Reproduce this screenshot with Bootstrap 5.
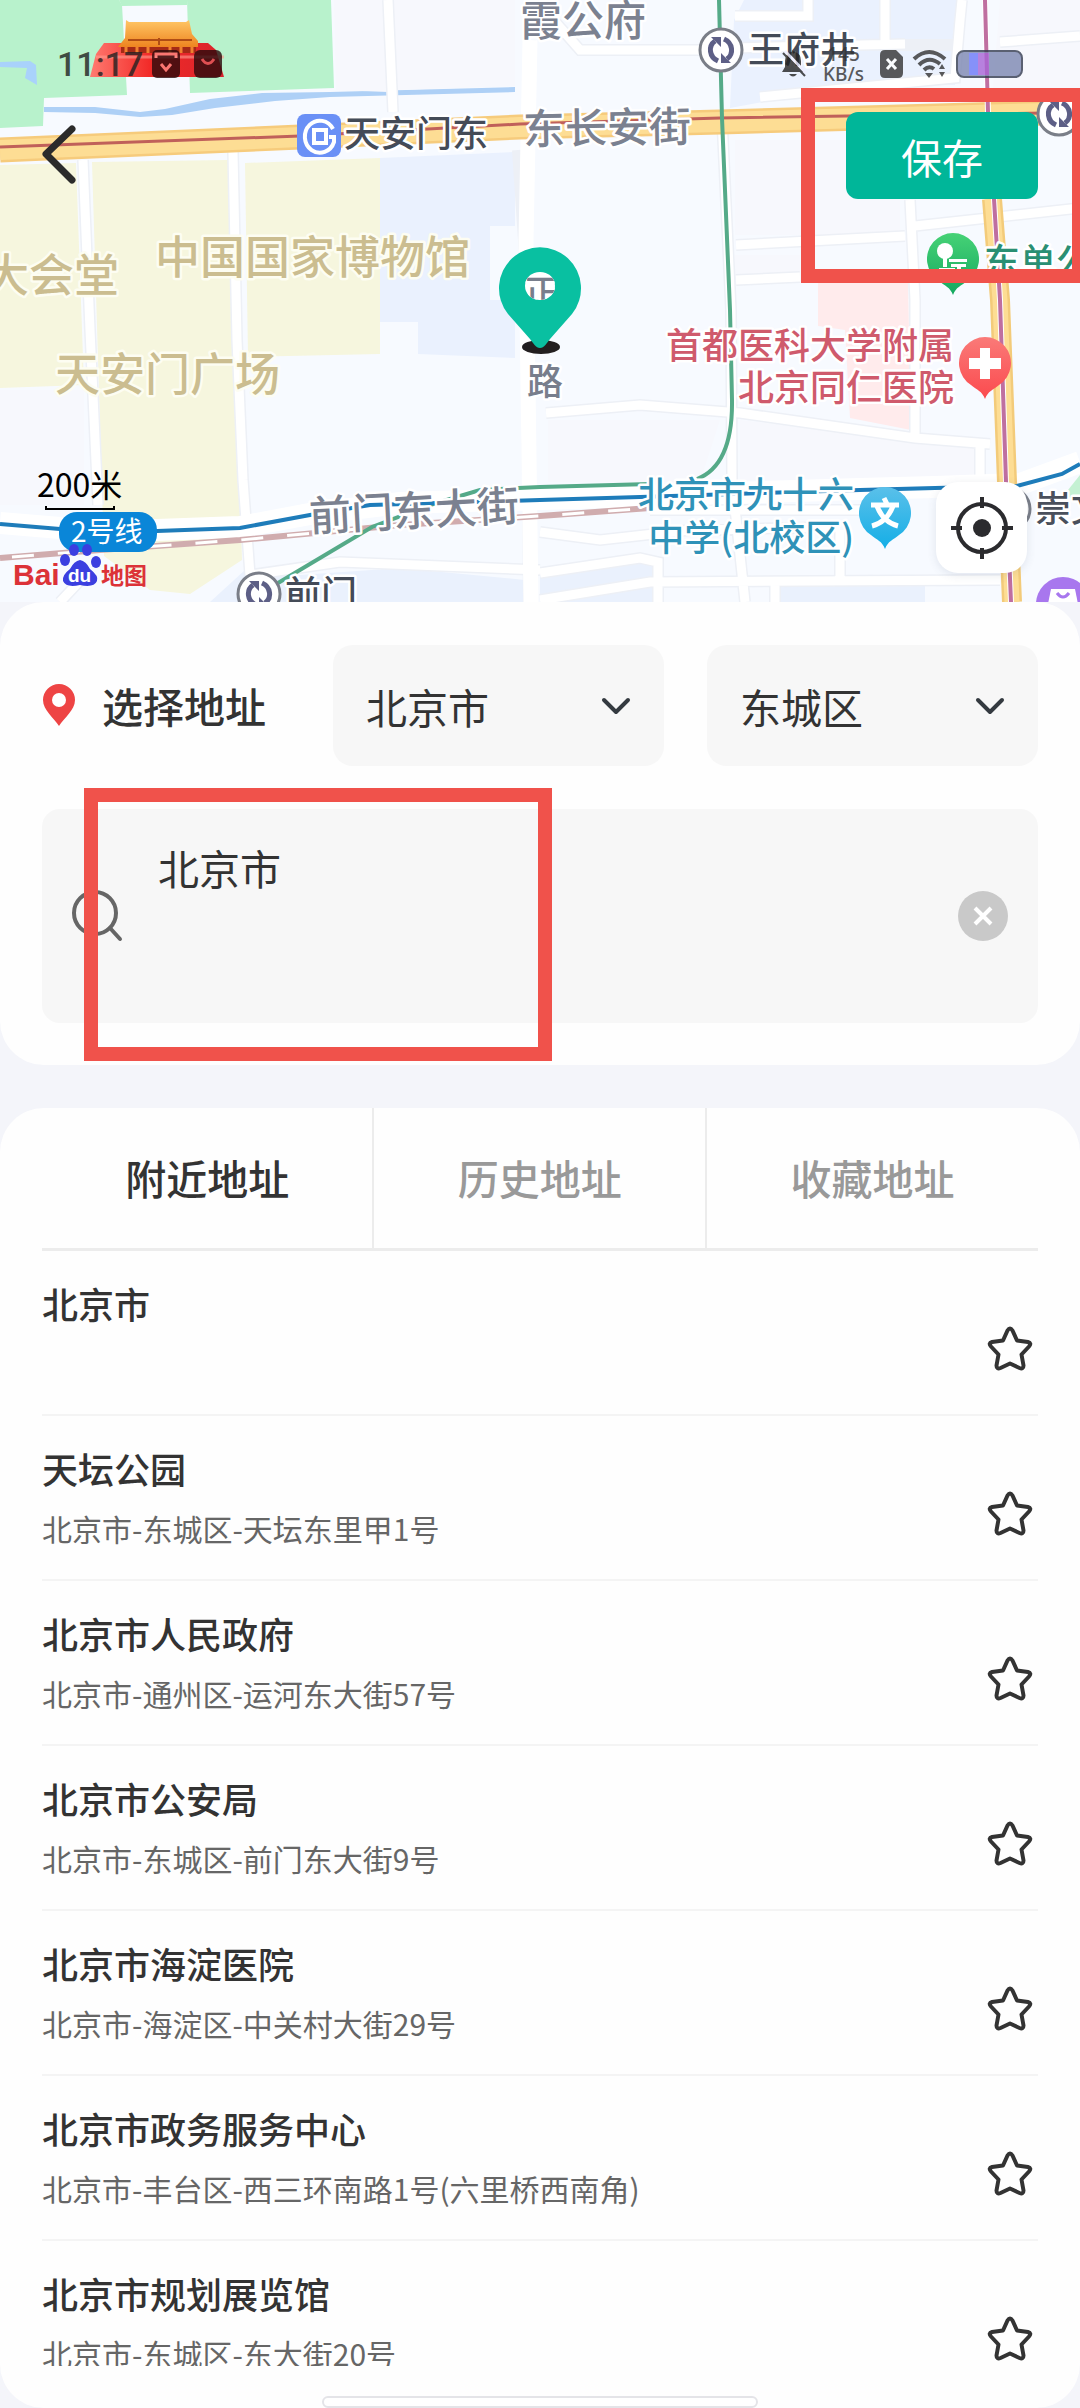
<!DOCTYPE html>
<html lang="zh-CN">
<head>
<meta charset="utf-8">
<meta name="viewport" content="width=device-width, initial-scale=1">
<title>选择地址</title>
<link href="https://cdn.jsdelivr.net/npm/bootstrap@5.3.0/dist/css/bootstrap.min.css" rel="stylesheet">
<style>
  :root { --ink: #333; --muted: #999; --edge: 42px; --frame: #f0524b; }
  body { background: #f4f5fa; color: var(--ink); font-family: "Noto Sans CJK SC", "Noto Sans", sans-serif; }
  .map-area { height: 602px; }
  .map-canvas { display: block; width: 100%; height: 100%; }
  .map-canvas text { paint-order: stroke; stroke: #fff; stroke-width: 5px; stroke-linejoin: round; font-weight: 500; }
  .map-canvas .flat { stroke: none; font-weight: 400; }
  .map-canvas .place { font-size: 45px; fill: #cbbd90; stroke: #fdfdf2; }
  .road-name { font-size: 42px; fill: #7b8190; }
  .poi { font-size: 36px; }
  .status-bar { top: 44px; left: 57px; right: 57px; height: 40px; opacity: .8; }
  .clock { font: 500 34px/40px Roboto, sans-serif; color: #222; }
  .net-speed { font: 500 19px/20px "Noto Sans", sans-serif; color: #333; }
  .back-btn { top: 122px; left: 36px; line-height: 0; }
  .save-btn { top: 112px; right: 42px; width: 192px; height: 87px; border-radius: 12px; background: #00b699; color: #fff; font-size: 41px; line-height: 60px; }
  .locate-btn { right: 53px; bottom: 29px; width: 91px; height: 91px; border-radius: 22px; background: #fff; box-shadow: 0 2px 10px rgba(60,70,110,.12); }
  .hint-frame { border: 14px solid var(--frame); pointer-events: none; }
  .hint-save { top: 88px; right: 0; width: 279px; height: 195px; border-right-width: 8px; }
  .hint-search { top: -21px; left: 42px; width: 468px; height: 273px; }
  .sheet { background: #fefefe; border-radius: 44px; padding: 0 var(--edge); }
  .sheet-filter { padding-top: 43px; padding-bottom: 42px; }
  .sheet-label { width: 248px; font-size: 41px; font-weight: 500; gap: 26px; }
  .filter-row { gap: 43px; margin-bottom: 43px; }
  .area-select { height: 121px; border: 0; border-radius: 20px; background-color: #f7f7f7; color: var(--ink); font-size: 41px; line-height: 60px; padding: 0 80px 0 33px; background-position: right 32px center; background-size: 32px; }
  .search-box { height: 214px; border-radius: 18px; background: #f7f7f7; padding: 0 30px 0 28px; }
  .search-text { height: 214px; resize: none; border: 0; background: transparent; color: var(--ink); font-size: 41px; line-height: 60px; padding: 28px 0 0 34px; overflow: hidden; }
  .search-text:focus { background: transparent; box-shadow: none; }
  .sheet-list { margin-top: 43px; }
  .tab-row { border-bottom: 3px solid #ececec; }
  .tab-btn { height: 140px; border: 0; border-right: 2px solid #ececec; background: none; color: var(--muted); font-size: 41px; font-weight: 500; }
  .tab-btn:last-child { border-right: 0; }
  .tab-btn.active { color: var(--ink); }
  .address-list { min-height: 0; }
  .address-item { height: 165px; border-bottom: 2px solid #f4f4f4; padding-top: 26px; }
  .address-name { font-size: 36px; font-weight: 500; line-height: 52px; margin-bottom: 14px; }
  .address-detail { font-size: 30px; line-height: 40px; color: #666; }
  .star-btn { margin: 48px 4px 0 0; line-height: 0; }
  .home-zone { height: 42px; }
  .home-bar { width: 436px; height: 12px; border: 2px solid #e4e4e8; border-radius: 8px; background: #fff; }
</style>
<script src="https://cdn.jsdelivr.net/npm/bootstrap@5.3.0/dist/js/bootstrap.bundle.min.js"></script>
</head>
<body class="vh-100 overflow-hidden d-flex flex-column">

<header class="map-area position-relative overflow-hidden flex-shrink-0">
  <svg class="map-canvas" viewBox="0 0 1080 602" preserveAspectRatio="xMidYMid slice" role="img" aria-label="地图">
    <defs>
      <linearGradient id="roof" x1="0" y1="0" x2="0" y2="1"><stop offset="0" stop-color="#ffc766"/><stop offset="1" stop-color="#ee8420"/></linearGradient>
      <linearGradient id="wall" x1="0" y1="0" x2="1" y2="0"><stop offset="0" stop-color="#ff7a70"/><stop offset=".45" stop-color="#f22a28"/><stop offset="1" stop-color="#d8242c"/></linearGradient>
      <linearGradient id="redPin" x1="0" y1="0" x2="0" y2="1"><stop offset="0" stop-color="#fa7a78"/><stop offset="1" stop-color="#fb4a4e"/></linearGradient>
      <linearGradient id="bluePin" x1="0" y1="0" x2="0" y2="1"><stop offset="0" stop-color="#5ac0ea"/><stop offset="1" stop-color="#14aee6"/></linearGradient>
      <linearGradient id="greenPin" x1="0" y1="0" x2="0" y2="1"><stop offset="0" stop-color="#46d276"/><stop offset="1" stop-color="#14a860"/></linearGradient>
      <clipPath id="hole"><ellipse cx="540" cy="286" rx="15" ry="14"/></clipPath>
      <g id="metro">
        <circle r="21" fill="#fff" stroke="#7a7e88" stroke-width="3"/>
        <path d="M-3 11C-12 7-13-4-6-9M3-11C12-7 13 4 6 9" fill="none" stroke="#5d5f86" stroke-width="5"/>
        <path d="M-10-13L0-13L0-3ZM10 13L0 13L0 3Z" fill="#5d5f86"/>
      </g>
      <path id="poiPin" d="M0 36C-3 28-8 27-14 22A26 26 0 1 1 14 22C8 27 3 28 0 36Z"/>
    </defs>
    <rect width="1080" height="602" fill="#f7faff"/>
    <!-- land use -->
    <path d="M0 0H119L122 5 127 95 44 98 43 126 0 128ZM187 0H331L334 88 190 93Z" fill="#b8f2cc"/>
    <path d="M119 0H187V5L122 6Z" fill="#b8f2cc"/>
    <path d="M0 62L30 61 36 65 37 85 25 78 27 68 0 67Z" fill="#a9d2fb"/>
    <path d="M44 107H95L140 112 165 109 210 99 262 93 330 92 515 87V92L330 97 275 101 215 108 172 115 140 117 95 113 44 112Z" fill="#aed0f6"/>
    <path d="M0 165L76 163 84 385 0 388ZM92 162L228 160 238 420 242 560 190 594 150 590 104 556ZM245 163L380 158V354L248 357Z" fill="#f6f6de"/>
    <path d="M380 158L515 152V226H490V300H515V358L418 354V322H380ZM744 0H960L955 85 880 80 730 108 734 20Z" fill="#eaf1fe"/>
    <path d="M818 283H908L911 430 850 418 845 330 818 326Z" fill="#ffebec"/>
    <path d="M210 602L245 570 300 575 400 568 525 580V602ZM540 575L655 560V602H540ZM780 586H925V602H780Z" fill="#eaf1fd"/>
    <path d="M1064 495L1080 475V502Z" fill="#c4f1d3"/>
    <path d="M334 0H385L388 92 336 90ZM394 0H515V86L395 90ZM1000 0H1080V90L992 100ZM735 140H900V235H735ZM735 255H800V280H735ZM0 390H84V505H0ZM740 420L975 448V480H740ZM548 420H720L700 482H548Z" fill="#f7f8fd"/>
    <!-- streets: casing, then surface -->
    <path d="M83 160L90 330 98 505M233 152L237 340 243 480 250 575M388 0L393 112M530 40L526 240 529 602M518 150L524 240 531 340M722 118L731 310 732 480 745 602M536 0L580 50H716M735 16H808V0M885 0V45H960M962 0L960 20 955 78 760 97M735 48L905 44M1000 42L1080 36M910 200L915 300 915 440M736 245L905 236M736 280L800 277M915 226L1080 208M546 413L640 405 740 413 915 438 990 444M980 445V482M540 532L600 540 690 530 840 527M540 573L640 558 658 562V602M540 600L650 582 1000 580M775 602V585M250 575L340 562 540 570M60 602L90 570M650 510H900M840 530V580" fill="none" stroke="#edf0f6" stroke-width="12"/>
    <path d="M83 160L90 330 98 505M233 152L237 340 243 480 250 575M388 0L393 112M722 118L731 310 732 480 745 602M536 0L580 50H716M735 16H808V0M885 0V45M962 0L960 20 955 78 760 97M735 48L905 44M1000 42L1080 36M910 200L915 300 915 440M736 245L905 236M736 280L800 277M915 226L1080 208M546 413L640 405 740 413 915 438 990 444M980 445V482M540 532L600 540 690 530 840 527M540 573L640 558 658 562V602M540 600L650 582 1000 580M775 602V585M250 575L340 562 540 570M60 602L90 570M650 510H900M840 530V580" fill="none" stroke="#fff" stroke-width="9"/>
    <path d="M530 40L526 240 531 602" fill="none" stroke="#fff" stroke-width="15"/>
    <path d="M0 523L60 528 157 530 240 527 310 514 400 503 540 499 640 496 860 489 935 487 1020 484 1080 462" fill="none" stroke="#fff" stroke-width="22"/>
    <!-- main roads -->
    <path d="M0 150L300 137 520 127 720 122 1045 113" fill="none" stroke="#f6cb7c" stroke-width="25"/>
    <path d="M0 150L300 137 520 127 720 122 1045 113" fill="none" stroke="#fddd94" stroke-width="20"/>
    <path d="M0 147L300 136 520 124 720 118 1045 113" fill="none" stroke="#c0605a" stroke-width="3"/>
    <path d="M992 199L1000 300 1007 482 1012 602" fill="none" stroke="#f3cb7a" stroke-width="20"/>
    <path d="M992 199L1000 300 1007 482 1012 602" fill="none" stroke="#fddd94" stroke-width="15"/>
    <path d="M985 0L988 112 994 199 1000 300 1006 482 1011 602" fill="none" stroke="#fff" stroke-width="6"/>
    <path d="M985 0L988 112 994 199 1000 300 1006 482 1011 602" fill="none" stroke="#bf6fa0" stroke-width="4"/>
    <!-- railway -->
    <path d="M0 558L100 550 240 540 400 525 540 516 650 508" fill="none" stroke="#d0acae" stroke-width="6"/>
    <path d="M0 558L100 550 240 540 400 525 540 516 650 508" fill="none" stroke="#fff" stroke-width="3" stroke-dasharray="22 24" stroke-dashoffset="34"/>
    <!-- metro lines -->
    <path d="M719 0L722 118 730 310 732 400Q733 465 697 479M650 484L540 487 480 490 430 505 372 527 278 583" fill="none" stroke="#55aa88" stroke-width="4"/>
    <path d="M0 524L60 529 157 531 240 528 310 515 370 505 540 500 640 497 860 490 935 488 1017 486 1062 474 1080 464" fill="none" stroke="#1e7cba" stroke-width="4"/>

    <!-- Tiananmen -->
    <path d="M104 43H208L216 50 224 77H90L96 54Z" fill="url(#wall)"/>
    <path d="M96 57L224 57" stroke="#ff9c90" stroke-width="3" opacity=".6"/>
    <path d="M121 46H196V53H121Z" fill="#a52a16"/>
    <path d="M126 53V46M137 53V46M148 53V46M170 53V46M181 53V46M192 53V46" stroke="#f08030" stroke-width="3"/>
    <path d="M126 20L129 22H186L189 20 192 34 198 41V47H118L125 38Z" fill="url(#roof)"/>
    <path d="M128 40H192M159 38V45" stroke="#b04c14" stroke-width="2"/>

    <!-- landmark and street labels -->
    <text class="road-name" x="520" y="36" fill="#8a91a6">霞公府</text>
    <text class="poi" x="748" y="63" fill="#444b57">王府井</text>
    <text class="road-name" x="523" y="143" transform="rotate(-1 610 130)">东长安街</text>
    <text class="poi" x="344" y="147" fill="#444b57">天安门东</text>
    <text class="place" x="-16" y="292">大会堂</text>
    <text class="place" x="155" y="274">中国国家博物馆</text>
    <text class="place" x="55" y="391">天安门广场</text>
    <text class="road-name" x="309" y="526" transform="rotate(-3 415 510)">前门东大街</text>
    <g fill="#cf5a6c"><text class="poi" x="954" y="359" text-anchor="end">首都医科大学附属</text><text class="poi" x="954" y="401" text-anchor="end">北京同仁医院</text></g>
    <g fill="#2f92b8"><text class="poi" x="854" y="508" text-anchor="end">北京市九十六</text><text class="poi" x="854" y="551" text-anchor="end">中学(北校区)</text></g>
    <text class="poi" x="984" y="275" fill="#2a8f73">东单公园</text>
    <text class="poi" x="527" y="395" fill="#787e8c">路</text>
    <text class="poi" x="1035" y="522" fill="#4a505c">崇文门</text>
    <text class="poi" x="285" y="607" fill="#444b57">前门</text>

    <!-- stations -->
    <rect x="297" y="114" width="44" height="43" rx="8" fill="#6a90f6"/>
    <path d="M333 129A15 16 0 1 0 334 142V137H329" fill="none" stroke="#fff" stroke-width="4"/>
    <rect x="314" y="130" width="12" height="13" fill="none" stroke="#fff" stroke-width="4"/>
    <use href="#metro" x="721" y="50"/><use href="#metro" x="1059" y="114"/><use href="#metro" x="259" y="594"/><use href="#metro" x="1009" y="509"/>

    <!-- points of interest -->
    <g transform="translate(953 259)"><use href="#poiPin" fill="url(#greenPin)"/><circle cx="-8" cy="-8" r="8" fill="#fff"/><path d="M-10-4H-6V8H-10ZM-4 0H14V3H-4ZM-2 5H13V8H8V13H4V8H-2ZM-14 9H2V12H-14Z" fill="#fff"/></g>
    <g transform="translate(985 363)"><use href="#poiPin" fill="url(#redPin)"/><path d="M-5-15H5V-5H16V6H5V16H-5V6H-16V-5H-5Z" fill="#fff"/></g>
    <g transform="translate(885 513)"><use href="#poiPin" fill="url(#bluePin)"/><path d="M-1-15L2-9M-14-8H14M-8-7Q-2 9 13 13M8-7Q2 9-13 13" fill="none" stroke="#fff" stroke-width="5"/></g>
    <circle cx="1063" cy="604" r="27" fill="#a877ee"/><path d="M1051 589H1075L1078 604H1048Z" fill="#fff"/><path d="M1057 593Q1063 601 1069 593" fill="none" stroke="#a877ee" stroke-width="3"/>

    <!-- scale, line badge, map logo -->
    <text class="flat" x="37" y="497" fill="#000" font-size="32">200米</text>
    <path d="M46 506V509H114V506" fill="none" stroke="#000" stroke-width="2"/>
    <rect x="59" y="512" width="98" height="40" rx="18" fill="#0a86d8"/>
    <text class="flat" x="71" y="542" fill="#fff" font-size="28">2号线</text>
    <g fill="#3b3fe0"><ellipse cx="65" cy="560" rx="5" ry="6"/><ellipse cx="74" cy="550" rx="5" ry="6"/><ellipse cx="87" cy="550" rx="5" ry="6"/><ellipse cx="96" cy="562" rx="5" ry="6"/><path d="M80 560Q86 561 90 569 99 576 97 581 94 588 80 585 66 588 63 581 62 575 70 569 74 561 80 560Z"/></g>
    <text class="flat" x="13" y="585" fill="#dc3238" style="font:700 30px 'Liberation Sans',sans-serif">Bai</text>
    <text class="flat" x="68" y="582" fill="#fff" style="font:700 19px 'Liberation Sans',sans-serif">du</text>
    <text class="flat" x="101" y="584" fill="#dc3238" style="font-size:23px;font-weight:700">地图</text>

    <!-- chosen point -->
    <ellipse cx="541" cy="347" rx="19" ry="7" fill="#231f20"/>
    <path d="M540 348C536 348 533 343 530 339L508 314A41 41 0 1 1 572 314L550 339C547 343 544 348 540 348Z" fill="#09c0a1"/>
    <ellipse cx="540" cy="286" rx="15" ry="14" fill="#fff"/>
    <g clip-path="url(#hole)"><text class="poi" x="524" y="306" fill="#787e8c">正</text></g>
  </svg>

  <div class="status-bar position-absolute d-flex align-items-center">
    <span class="clock">11:17</span>
    <svg class="ms-2" width="72" height="30" viewBox="0 0 72 30" aria-hidden="true">
      <rect x="1" y="1" width="28" height="28" rx="5" fill="#2b0a0c"/><path d="M5 9V5H25V9M10 15L15 21 20 15" fill="none" stroke="#ff8a84" stroke-width="3"/>
      <rect x="43" y="1" width="28" height="28" rx="6" fill="#2b0a0c"/><path d="M51 10Q57 19 63 10" fill="none" stroke="#e05a5c" stroke-width="3"/>
    </svg>
    <div class="ms-auto d-flex align-items-center">
      <svg class="me-3" width="26" height="30" viewBox="0 0 26 30" aria-hidden="true"><path d="M12 2Q20 4 20 12V18L24 23H1L4 18V12Q4 4 12 2ZM8 25H16Q12 30 8 25Z" fill="#222"/><path d="M4 2L25 24" stroke="#eef" stroke-width="3"/><path d="M2 4L24 27" stroke="#222" stroke-width="2"/></svg>
      <span class="net-speed text-center">145<br>KB/s</span>
      <svg class="ms-3" width="24" height="30" viewBox="0 0 24 30" aria-hidden="true"><path d="M5 1H16L23 8V24Q23 29 18 29H5Q0 29 0 24V6Q0 1 5 1Z" fill="#333"/><path d="M7 10L16 20M16 10L7 20" stroke="#fff" stroke-width="3"/></svg>
      <svg class="ms-2" width="36" height="30" viewBox="0 0 36 30" aria-hidden="true"><path d="M2 10Q17-4 33 10M7 16Q17 6 28 15M12 21Q17 16 22 20" fill="none" stroke="#333" stroke-width="4"/><path d="M13 24H21L17 29ZM27 20L30 15 33 20ZM27 23H33L30 28Z" fill="#333"/></svg>
      <svg class="ms-2" width="67" height="28" viewBox="0 0 67 28" aria-hidden="true"><rect x="1" y="1" width="65" height="26" rx="7" fill="#7c87b2"/><path d="M13 3H24V25H13Z" fill="#6a78f8"/><path d="M22 3H33V25H22Z" fill="#a864d6"/><rect x="1" y="1" width="65" height="26" rx="7" fill="none" stroke="#333b50" stroke-width="2"/></svg>
    </div>
  </div>

  <button type="button" class="back-btn btn p-0 border-0 position-absolute" aria-label="返回">
    <svg width="42" height="64" viewBox="0 0 42 64"><path d="M36 7L10 32 36 58" fill="none" stroke="#2b2b2b" stroke-width="7" stroke-linecap="round" stroke-linejoin="round"/></svg>
  </button>
  <button type="button" class="save-btn btn p-0 border-0 position-absolute">保存</button>
  <button type="button" class="locate-btn btn p-0 border-0 position-absolute" aria-label="定位">
    <svg width="64" height="64" viewBox="0 0 64 64"><circle cx="32" cy="32" r="24" fill="none" stroke="#2b2b2e" stroke-width="4"/><circle cx="32" cy="32" r="9" fill="#2b2b2e"/><path d="M32 1V12M32 52V63M1 32H12M52 32H63" stroke="#2b2b2e" stroke-width="4"/></svg>
  </button>
  <div class="hint-frame hint-save position-absolute"></div>
</header>

<section class="sheet sheet-filter flex-shrink-0">
  <div class="filter-row d-flex align-items-center">
    <label class="sheet-label d-flex align-items-center flex-shrink-0 text-nowrap" for="city">
      <svg width="34" height="44" viewBox="0 0 34 44" class="flex-shrink-0" aria-hidden="true"><path d="M17 42C12 34 1 26 1 16A16 16 0 0 1 33 16C33 26 22 34 17 42Z" fill="#ee4444"/><circle cx="17" cy="16" r="7" fill="#fff"/></svg>
      选择地址
    </label>
    <select id="city" class="form-select area-select"><option>北京市</option></select>
    <select id="district" class="form-select area-select" aria-label="区县"><option>东城区</option></select>
  </div>
  <div class="search-box position-relative d-flex align-items-center">
    <svg class="flex-shrink-0" width="54" height="54" viewBox="0 0 54 54" aria-hidden="true"><circle cx="25" cy="24" r="21" fill="none" stroke="#666" stroke-width="4"/><path d="M40 39L50 50" stroke="#666" stroke-width="4" stroke-linecap="round"/></svg>
    <textarea class="form-control search-text" aria-label="搜索地址">北京市</textarea>
    <button type="button" class="btn p-0 border-0 lh-1 flex-shrink-0" aria-label="清除">
      <svg class="d-block" width="50" height="50" viewBox="0 0 50 50"><circle cx="25" cy="25" r="25" fill="#c9c9c9"/><path d="M17 17L33 33M33 17L17 33" stroke="#fff" stroke-width="4"/></svg>
    </button>
    <div class="hint-frame hint-search position-absolute"></div>
  </div>
</section>

<main class="sheet sheet-list flex-grow-1 d-flex flex-column overflow-hidden">
  <div class="tab-row d-flex flex-shrink-0" role="tablist">
    <button type="button" role="tab" aria-selected="true" class="tab-btn active flex-fill w-100">附近地址</button>
    <button type="button" role="tab" aria-selected="false" class="tab-btn flex-fill w-100">历史地址</button>
    <button type="button" role="tab" aria-selected="false" class="tab-btn flex-fill w-100">收藏地址</button>
  </div>
  <svg class="d-none" aria-hidden="true"><symbol id="star" viewBox="0 0 48 48"><path d="M21.500 5.500Q24 1.500 26.500 5.500L31 15.500 42 17Q46 18 43 21.500L35.500 29.500 37.500 40.500Q37.500 44.500 33.500 43L24 38.500 14.500 43Q10.500 44.500 10.500 40.500L12.500 29.500 5 21.500Q2 18 6 17L17 15.500Z" fill="none" stroke="#333" stroke-width="4" stroke-linejoin="round"/></symbol></svg>
  <ul class="address-list list-unstyled mb-0 flex-grow-1 overflow-hidden">
    <li class="address-item d-flex justify-content-between align-items-start"><div><div class="address-name">北京市</div></div><button type="button" class="star-btn btn p-0 border-0" aria-label="收藏"><svg width="48" height="48"><use href="#star"/></svg></button></li>
    <li class="address-item d-flex justify-content-between align-items-start"><div><div class="address-name">天坛公园</div><div class="address-detail">北京市-东城区-天坛东里甲1号</div></div><button type="button" class="star-btn btn p-0 border-0" aria-label="收藏"><svg width="48" height="48"><use href="#star"/></svg></button></li>
    <li class="address-item d-flex justify-content-between align-items-start"><div><div class="address-name">北京市人民政府</div><div class="address-detail">北京市-通州区-运河东大街57号</div></div><button type="button" class="star-btn btn p-0 border-0" aria-label="收藏"><svg width="48" height="48"><use href="#star"/></svg></button></li>
    <li class="address-item d-flex justify-content-between align-items-start"><div><div class="address-name">北京市公安局</div><div class="address-detail">北京市-东城区-前门东大街9号</div></div><button type="button" class="star-btn btn p-0 border-0" aria-label="收藏"><svg width="48" height="48"><use href="#star"/></svg></button></li>
    <li class="address-item d-flex justify-content-between align-items-start"><div><div class="address-name">北京市海淀医院</div><div class="address-detail">北京市-海淀区-中关村大街29号</div></div><button type="button" class="star-btn btn p-0 border-0" aria-label="收藏"><svg width="48" height="48"><use href="#star"/></svg></button></li>
    <li class="address-item d-flex justify-content-between align-items-start"><div><div class="address-name">北京市政务服务中心</div><div class="address-detail">北京市-丰台区-西三环南路1号(六里桥西南角)</div></div><button type="button" class="star-btn btn p-0 border-0" aria-label="收藏"><svg width="48" height="48"><use href="#star"/></svg></button></li>
    <li class="address-item d-flex justify-content-between align-items-start"><div><div class="address-name">北京市规划展览馆</div><div class="address-detail">北京市-东城区-东大街20号</div></div><button type="button" class="star-btn btn p-0 border-0" aria-label="收藏"><svg width="48" height="48"><use href="#star"/></svg></button></li>
  </ul>
  <div class="home-zone d-flex align-items-end justify-content-center flex-shrink-0"><div class="home-bar"></div></div>
</main>
</body>
</html>
